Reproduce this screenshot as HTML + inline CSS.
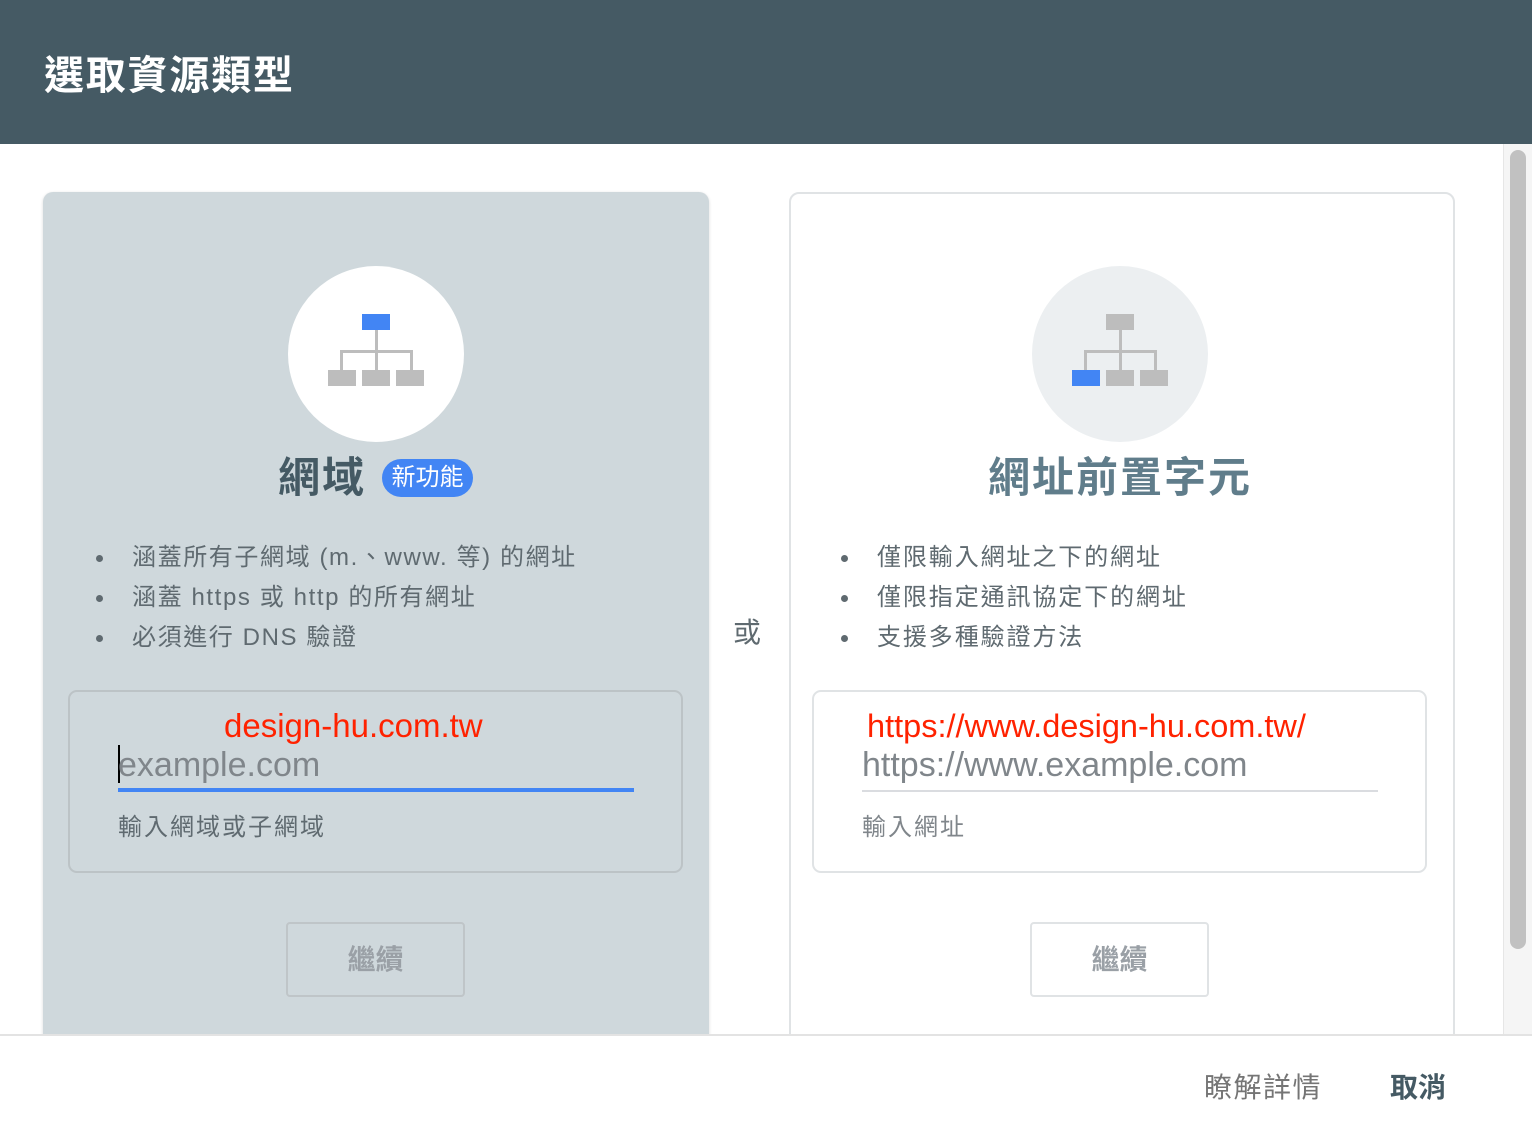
<!DOCTYPE html>
<html><head><meta charset="utf-8"><style>
*{margin:0;padding:0;box-sizing:border-box}
body{width:1532px;height:1136px;position:relative;overflow:hidden;background:#fff;font-family:"Liberation Sans","Noto Sans CJK TC",sans-serif}
.a{position:absolute;white-space:nowrap}
.hdr{left:0;top:0;width:1532px;height:144px;background:#455a64}
.card{top:192px;width:666px;height:900px;border-radius:10px}
.circ{width:176px;height:176px;border-radius:50%}
.bl{font-size:24px;color:#5f6a70;line-height:30px;letter-spacing:1.6px}
.dot{width:7px;height:7px;border-radius:50%;background:#5f6a70}
.box{width:615px;height:183px;border:2px solid #bcc3c6;border-radius:9px}
.btn{width:179px;height:75px;border:2px solid #bfc5c8;border-radius:4px;font-size:28px;color:#9aa0a6;font-weight:bold;text-align:center;line-height:72px}
</style></head><body>
<div class="a hdr"></div>
<div class="a" style="left:44px;top:51px;font-size:40px;font-weight:bold;color:#fff;line-height:50px;letter-spacing:1.8px">選取資源類型</div>

<div class="a card" style="left:43px;background:#cfd8dc;box-shadow:0 1px 3px rgba(0,0,0,.15)"></div>
<div class="a card" style="left:789px;background:#fff;border:2px solid #e0e3e5"></div>

<div class="a circ" style="left:288px;top:266px;background:#fff"></div>
<div class="a circ" style="left:1032px;top:266px;background:#eceff1"></div>
<svg class="a" style="left:0;top:0" width="1532" height="1136">
<g fill="#bdbdbd">
<rect x="362" y="314" width="28" height="16" fill="#4285f4"/>
<rect x="375" y="330" width="3" height="22"/><rect x="340" y="350" width="73" height="3"/>
<rect x="340" y="350" width="3" height="20"/><rect x="375" y="350" width="3" height="20"/><rect x="410" y="350" width="3" height="20"/>
<rect x="328" y="370" width="28" height="16"/><rect x="362" y="370" width="28" height="16"/><rect x="396" y="370" width="28" height="16"/>
<rect x="1106" y="314" width="28" height="16"/>
<rect x="1119" y="330" width="3" height="22"/><rect x="1084" y="350" width="73" height="3"/>
<rect x="1084" y="350" width="3" height="20"/><rect x="1119" y="350" width="3" height="20"/><rect x="1154" y="350" width="3" height="20"/>
<rect x="1072" y="370" width="28" height="16" fill="#4285f4"/><rect x="1106" y="370" width="28" height="16"/><rect x="1140" y="370" width="28" height="16"/>
</g></svg>

<div class="a" style="left:278px;top:451px;font-size:42px;font-weight:bold;color:#455a64;line-height:54px;letter-spacing:2px">網域</div>
<div class="a" style="left:382px;top:459px;width:91px;height:38px;border-radius:19px;background:#4285f4;color:#fff;font-size:24px;line-height:38px;text-align:center">新功能</div>
<div class="a" style="left:988px;top:451px;font-size:42px;font-weight:bold;color:#607d8b;line-height:54px;letter-spacing:2px">網址前置字元</div>

<div class="a dot" style="left:96px;top:555px"></div><div class="a bl" style="left:132px;top:543px">涵蓋所有子網域 (m.、www. 等) 的網址</div>
<div class="a dot" style="left:96px;top:595px"></div><div class="a bl" style="left:132px;top:583px">涵蓋 https 或 http 的所有網址</div>
<div class="a dot" style="left:96px;top:635px"></div><div class="a bl" style="left:132px;top:623px">必須進行 DNS 驗證</div>
<div class="a dot" style="left:841px;top:555px"></div><div class="a bl" style="left:877px;top:543px;letter-spacing:1.9px">僅限輸入網址之下的網址</div>
<div class="a dot" style="left:841px;top:595px"></div><div class="a bl" style="left:877px;top:583px;letter-spacing:1.9px">僅限指定通訊協定下的網址</div>
<div class="a dot" style="left:841px;top:635px"></div><div class="a bl" style="left:877px;top:623px;letter-spacing:1.9px">支援多種驗證方法</div>

<div class="a" style="left:733px;top:615px;font-size:28px;color:#5f6a70;line-height:36px">或</div>

<div class="a box" style="left:68px;top:690px"></div>
<div class="a" style="left:224px;top:707px;font-size:33px;color:#ff2200;line-height:38px">design-hu.com.tw</div>
<div class="a" style="left:118px;top:745px;width:2px;height:38px;background:#000"></div>
<div class="a" style="left:118px;top:745px;font-size:34px;color:#80868b;line-height:40px">example.com</div>
<div class="a" style="left:118px;top:788px;width:516px;height:4px;background:#4285f4"></div>
<div class="a" style="left:118px;top:813px;font-size:24px;color:#5f6a70;line-height:30px;letter-spacing:2px">輸入網域或子網域</div>

<div class="a box" style="left:812px;top:690px;border-color:#e0e3e5"></div>
<div class="a" style="left:867px;top:707px;font-size:32.5px;color:#ff2200;line-height:38px">https://www.design-hu.com.tw/</div>
<div class="a" style="left:862px;top:745px;font-size:34px;color:#80868b;line-height:40px">https://www.example.com</div>
<div class="a" style="left:862px;top:790px;width:516px;height:2px;background:#dadce0"></div>
<div class="a" style="left:862px;top:813px;font-size:24px;color:#80868b;line-height:30px;letter-spacing:2px">輸入網址</div>

<div class="a btn" style="left:286px;top:922px">繼續</div>
<div class="a btn" style="left:1030px;top:922px;border-color:#e0e3e5">繼續</div>

<div class="a" style="left:1503px;top:144px;width:29px;height:891px;background:#f5f5f5;border-left:1px solid #e6e6e6"></div>
<div class="a" style="left:1510px;top:150px;width:16px;height:799px;background:#c1c1c1;border-radius:8px"></div>

<div class="a" style="left:0;top:1034px;width:1532px;height:102px;background:#fff;border-top:2px solid #e3e3e3"></div>
<div class="a" style="left:1204px;top:1070px;font-size:28px;color:#757575;line-height:36px;letter-spacing:1.5px">瞭解詳情</div>
<div class="a" style="left:1390px;top:1070px;font-size:28px;color:#455a64;font-weight:bold;line-height:36px">取消</div>
</body></html>
